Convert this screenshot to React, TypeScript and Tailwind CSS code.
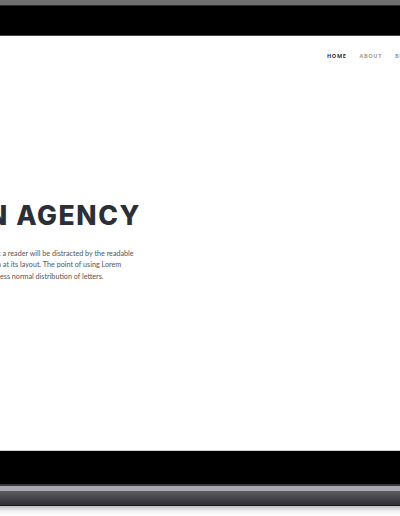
export default function App() {
  return (
    <div className="w-[400px] h-[516px] overflow-hidden bg-white flex flex-col">
      {/* top lid edge */}
      <div className="h-[5px] bg-[#6f6f6f] shrink-0" />
      <div className="h-[1px] bg-[#2a2a2a] shrink-0" />
      <div className="h-[29px] bg-black shrink-0" />
      <div className="h-[1px] bg-[#4a4a4a] shrink-0" />

      {/* screen */}
      <div className="h-[414px] bg-white overflow-hidden shrink-0">
        <nav className="flex gap-[13px] pl-[327px] pt-[16px] whitespace-nowrap font-['Open_Sans',sans-serif] text-[5.5px] font-bold tracking-[0.12em]">
          <span className="text-[#2b2b2b]">HOME</span>
          <span className="text-[#9a9a9a]">ABOUT</span>
          <span className="text-[#9a9a9a]">BRAND</span>
        </nav>

        <h1 className="mt-[142px] ml-[-13px] whitespace-nowrap font-['Inter',sans-serif] text-[26.5px] font-extrabold leading-none tracking-[0.06em] text-[#2d2f36]">
          N AGENCY
        </h1>

        <div className="mt-[19px] font-['Lato',sans-serif] text-[7.2px] leading-[11.5px] text-[#555555] whitespace-nowrap">
          <p className="ml-[-2px]">t a reader will be distracted by the readable</p>
          <p className="ml-[-3px]">n at its layout. The point of using Lorem</p>
          <p>ess normal distribution of letters.</p>
        </div>
      </div>

      {/* bottom bezel and base */}
      <div className="h-[1px] bg-[#cfcfcf] shrink-0" />
      <div className="h-[33px] bg-black shrink-0" />
      <div className="h-[2px] bg-[#3a3a3a] shrink-0" />
      <div className="h-[5px] bg-[#a9a8ae] shrink-0" />
      <div className="h-[14px] bg-gradient-to-b from-[#5e5d62] to-[#2f2e33] shrink-0" />
      <div className="h-[1px] bg-[#1a1a1a] shrink-0" />
      <div className="flex-1 bg-gradient-to-b from-[#bdbdbd] via-[#f0f0f0] to-white" />
    </div>
  );
}
